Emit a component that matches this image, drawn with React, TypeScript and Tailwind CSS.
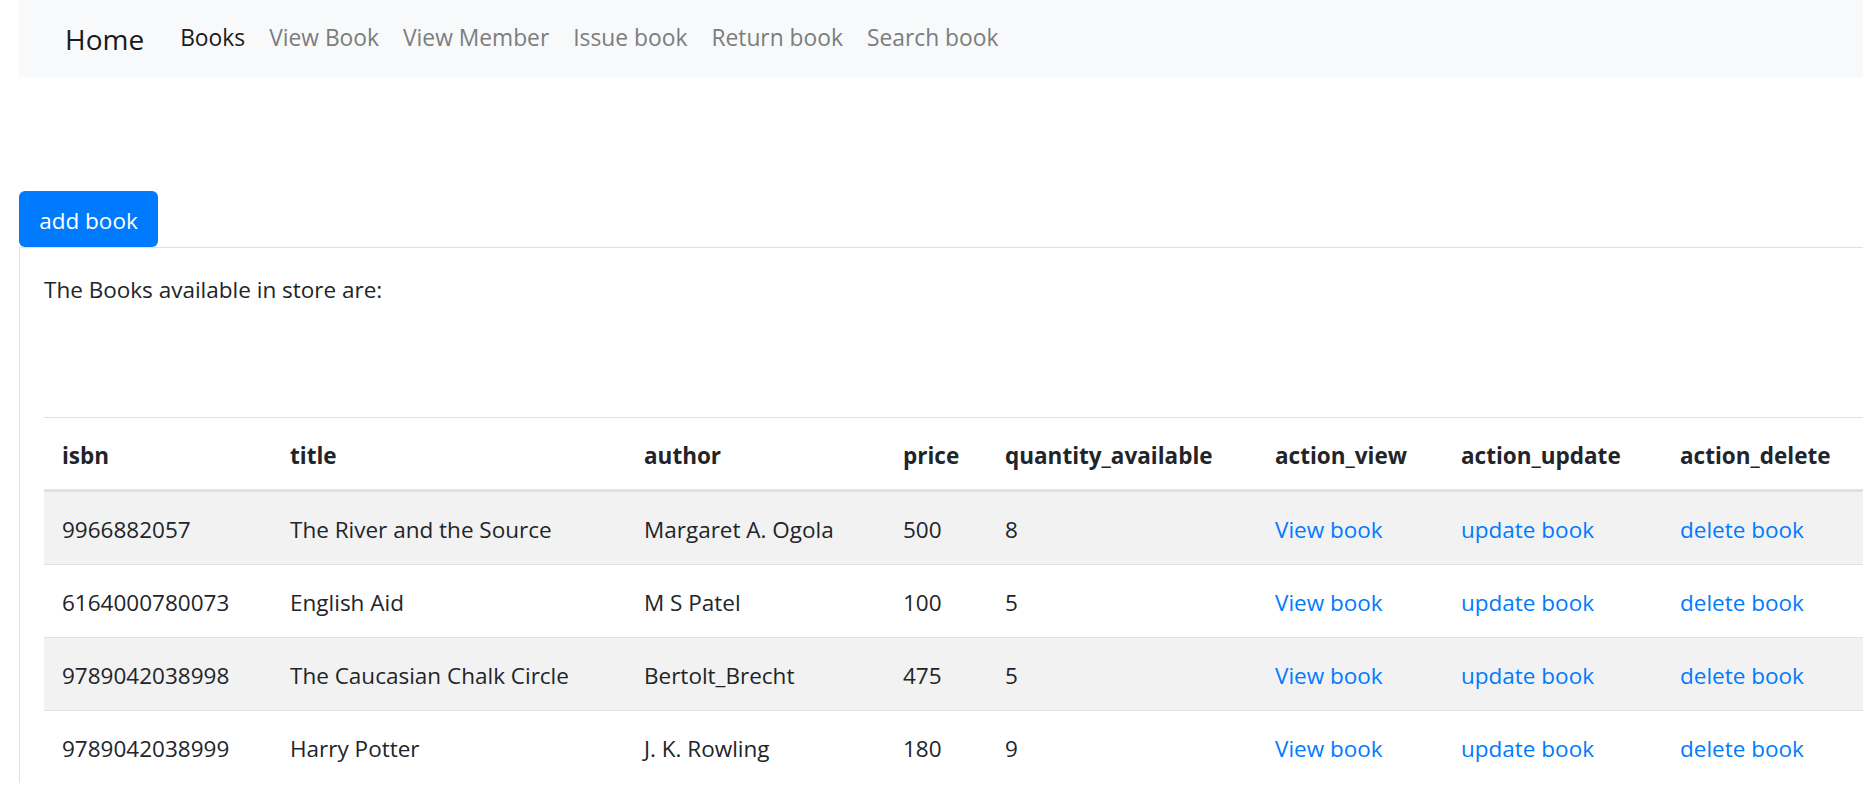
import React from "react";

const books = [
  { isbn: "9966882057", title: "The River and the Source", author: "Margaret A. Ogola", price: "500", qty: "8" },
  { isbn: "6164000780073", title: "English Aid", author: "M S Patel", price: "100", qty: "5" },
  { isbn: "9789042038998", title: "The Caucasian Chalk Circle", author: "Bertolt_Brecht", price: "475", qty: "5" },
  { isbn: "9789042038999", title: "Harry Potter", author: "J. K. Rowling", price: "180", qty: "9" },
];

const heads = [
  { label: "isbn", w: "w-[228px]" },
  { label: "title", w: "w-[354px]" },
  { label: "author", w: "w-[259px]" },
  { label: "price", w: "w-[102px]" },
  { label: "quantity_available", w: "w-[270px]" },
  { label: "action_view", w: "w-[186px]" },
  { label: "action_update", w: "w-[219px]" },
  { label: "action_delete", w: "w-[260px]" },
];

const NavBar = () => {
  const links = ["View Book", "View Member", "Issue book", "Return book", "Search book"];
  return (
    <nav className="ml-[19px] h-[77px] bg-[#f8f9fa] flex items-center pl-[46px]">
      <a className="text-[28px] text-[#1a1a1a] leading-none mr-[24px]">Home</a>
      <div className="flex items-center text-[22.8px] leading-none">
        <a className="px-[12px] text-[#1a1a1a]">Books</a>
        {links.map((l) => (
          <a key={l} className="px-[12px] text-[#7c7d7e]">
            {l}
          </a>
        ))}
      </div>
    </nav>
  );
};

export default function App() {
  return (
    <div
      className="w-full min-h-[797px] bg-white text-[#212529] overflow-hidden"
      style={{ fontFamily: '"Open Sans", "Noto Sans", sans-serif' }}
    >
      <NavBar />

      <div className="ml-[19px] mt-[114px]">
        <button className="h-[56px] w-[139px] pt-[3px] bg-[#007bff] text-white text-[22.5px] rounded-[6px] flex items-center justify-center">
          add book
        </button>

        <div className="w-[1900px] border-l-[1.5px] border-t-[1.5px] border-[#e0e0e0]">
          <div className="pl-[24px] pt-[24px]">
            <p className="text-[22.5px] leading-[36px]">The Books available in store are:</p>

            <table className="mt-[109px] table-fixed w-[1878px] border-collapse text-[22.5px] leading-[36px] text-left">
              <thead>
                <tr className="border-t-[1.5px] border-[#dee2e6]">
                  {heads.map((h) => (
                    <th
                      key={h.label}
                      className={`${h.w} pt-[20px] pb-[15px] px-[18px] font-bold border-b-[3px] border-[#dee2e6] align-middle`}
                    >
                      {h.label}
                    </th>
                  ))}
                  <th className="border-b-[3px] border-[#dee2e6]"></th>
                </tr>
              </thead>
              <tbody>
                {books.map((b, i) => (
                  <tr
                    key={b.isbn}
                    className={`${i % 2 === 0 ? "bg-[#f2f2f2]" : "bg-white"} ${i > 0 ? "border-t-[1.5px] border-[#dee2e6]" : ""} [&>td]:pt-[20px] [&>td]:pb-[16px] [&>td]:px-[18px]`}
                  >
                    <td>{b.isbn}</td>
                    <td>{b.title}</td>
                    <td>{b.author}</td>
                    <td>{b.price}</td>
                    <td>{b.qty}</td>
                    <td className="text-[#007bff]">View book</td>
                    <td className="text-[#007bff]">update book</td>
                    <td className="text-[#007bff]">delete book</td>
                    <td></td>
                  </tr>
                ))}
              </tbody>
            </table>
          </div>
        </div>
      </div>
    </div>
  );
}
